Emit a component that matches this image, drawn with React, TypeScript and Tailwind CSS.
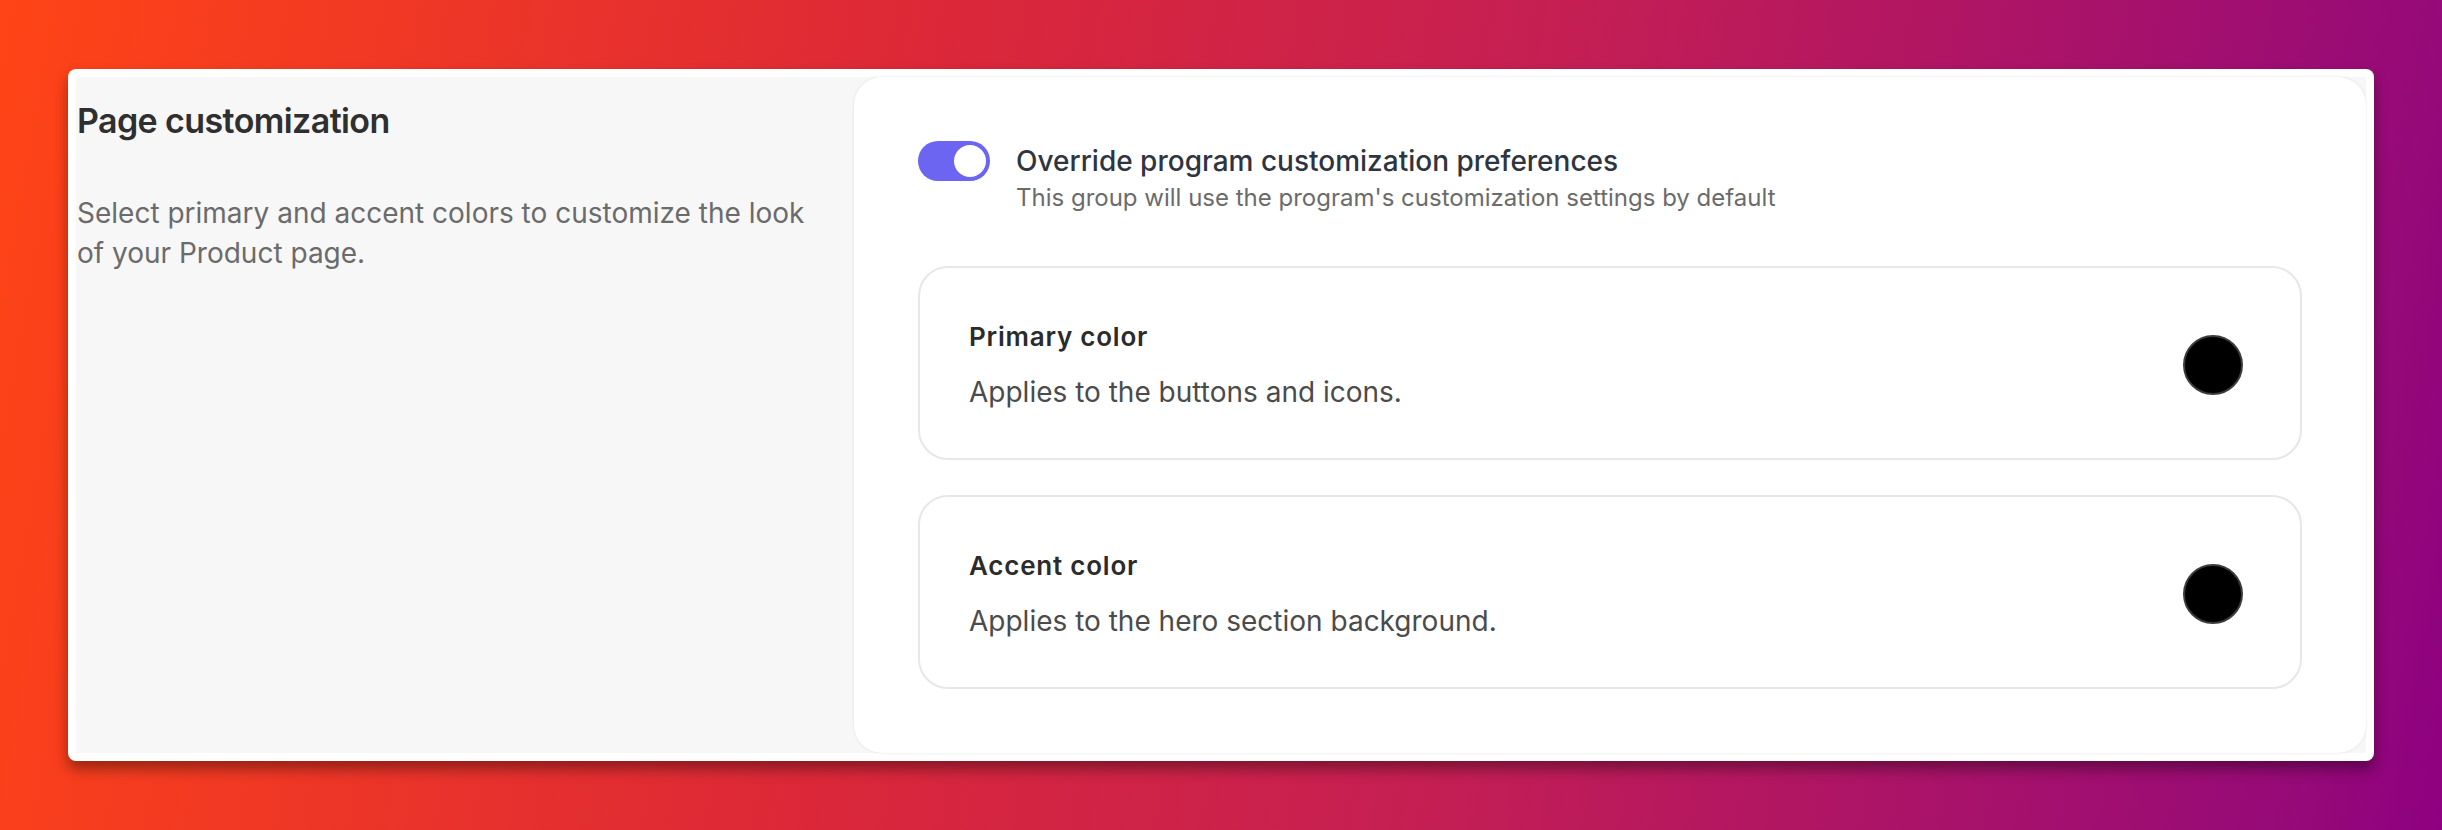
import React from "react";

const ColorRow = ({ title, text }: { title: string; text: string }) => {
  return (
    <div className="flex items-center justify-between rounded-[30px] border-2 border-[#e7e7e7] pl-[49px] pr-[57px] pt-[49px] pb-[46px]">
      <div>
        <div className="text-[26px] leading-[40px] font-semibold tracking-[0.03em] text-[#2b2b2b]">{title}</div>
        <div className="mt-[15px] text-[28px] leading-[40px] text-[#4b4b4b]">{text}</div>
      </div>
      <div className="h-[60px] w-[60px] rounded-full border-2 border-[#3c3c3c] bg-black" />
    </div>
  );
};

const Toggle = () => {
  return (
    <div className="flex h-[40px] w-[72px] shrink-0 items-center justify-end rounded-full bg-[#6b65f1] p-[4px]">
      <div className="h-[32px] w-[32px] rounded-full bg-white" />
    </div>
  );
};

export default function App() {
  return (
    <div className="min-h-screen w-full bg-[linear-gradient(100deg,#ff4416_0%,#dc2838_36%,#c31e55_62%,#960a78_94%,#8e0080_100%)] px-[68px] pt-[69px] pb-[70px] font-['Inter',sans-serif]">
      <div className="rounded-lg bg-white p-2 shadow-[0_8px_14px_rgba(0,0,0,0.38)]">
        <div className="flex bg-[#f7f7f7]">
          <div className="w-[778px] shrink-0 pl-px pt-6">
            <h2 className="text-[34px] leading-[40px] font-semibold tracking-[-0.6px] text-[#2f2f2f]">Page customization</h2>
            <p className="mt-[52px] max-w-[745px] text-[28px] leading-[40px] text-[#6b6b6b]">
              Select primary and accent colors to customize the look of your Product page.
            </p>
          </div>
          <div className="flex-1 rounded-[28px] bg-white p-16 shadow-[0_0_3px_rgba(0,0,0,0.1)]">
            <div className="flex items-start gap-[26px]">
              <Toggle />
              <div>
                <div className="text-[28px] leading-[40px] font-medium text-[#2e3540]">
                  Override program customization preferences
                </div>
                <div className="text-[24px] leading-[34px] text-[#6b6b6b]">
                  This group will use the program's customization settings by default
                </div>
              </div>
            </div>
            <div className="mt-[51px] flex flex-col gap-[35px]">
              <ColorRow title="Primary color" text="Applies to the buttons and icons." />
              <ColorRow title="Accent color" text="Applies to the hero section background." />
            </div>
          </div>
        </div>
      </div>
    </div>
  );
}
